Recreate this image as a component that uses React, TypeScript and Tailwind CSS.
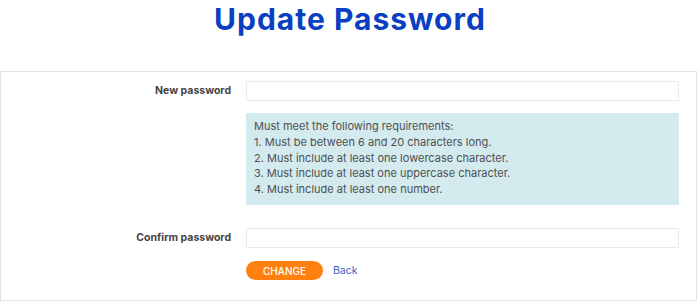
export default function App() {
  return (
    <div className="w-[700px] h-[303px] bg-white font-['Inter',sans-serif] text-[#444]">
      <div className="h-[71px] text-center">
        <h1 className="text-[30px] leading-[38px] font-bold text-[#0b3fc1] tracking-[1px]">Update Password</h1>
      </div>

      <div className="mr-[3px] h-[230px] border border-[#e2e2e2] pt-[9px]">
        <div className="flex items-center">
          <label className="w-[230px] text-right text-[10.5px] font-bold text-[#444]">New password</label>
          <input type="password" className="ml-[15px] w-[433px] h-[20px] border border-[#eaeaea] outline-none" />
        </div>

        <div className="ml-[245px] mt-[12px] w-[433px] h-[92px] bg-[#d3eaef] pl-[8px] pt-[6px] text-[11px] leading-[15.8px] text-[#505050]">
          <p>Must meet the following requirements:</p>
          <p>1. Must be between 6 and 20 characters long.</p>
          <p>2. Must include at least one lowercase character.</p>
          <p>3. Must include at least one uppercase character.</p>
          <p>4. Must include at least one number.</p>
        </div>

        <div className="flex items-center mt-[23px]">
          <label className="w-[230px] text-right text-[10.5px] font-bold text-[#444]">Confirm password</label>
          <input type="password" className="ml-[15px] w-[433px] h-[20px] border border-[#eaeaea] outline-none" />
        </div>

        <div className="flex items-center ml-[245px] mt-[13px]">
          <button className="w-[77px] h-[19px] rounded-full bg-[#ff7f0f] text-white text-[10px] font-medium leading-none">CHANGE</button>
          <a className="ml-[10px] text-[10.5px] text-[#3a5cc0]">Back</a>
        </div>
      </div>
    </div>
  );
}
